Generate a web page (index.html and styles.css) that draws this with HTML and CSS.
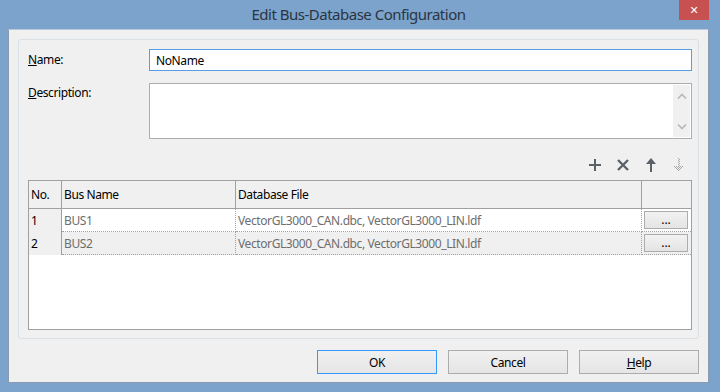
FILE: index.html
```html
<!DOCTYPE html>
<html lang="en">
<head>
    <meta charset="UTF-8">
    <meta name="viewport" content="width=device-width, initial-scale=1.0">
    <title>Edit Bus-Database Configuration</title>
    <link rel="stylesheet" href="styles.css">
</head>
<body>
    <div class="window">
        <div class="titlebar">
            <span></span>
            <span class="title">Edit Bus-Database Configuration</span>
            <button class="close-btn" type="button">&#x2715;</button>
        </div>

        <div class="client">
            <div class="group">
                <div class="form-grid">
                    <label for="name" class="field-label"><u>N</u>ame:</label>
                    <input type="text" id="name" class="name-box" value="NoName">

                    <label for="description" class="field-label desc-label"><u>D</u>escription:</label>
                    <div class="desc-box">
                        <textarea id="description" class="desc-text"></textarea>
                        <div class="scrollbar">
                            <svg width="10" height="6" viewBox="0 0 10 6"><path d="M1 5.5 L5 1.5 L9 5.5" fill="none" stroke="#b8b8b8" stroke-width="1.6"/></svg>
                            <svg width="10" height="6" viewBox="0 0 10 6"><path d="M1 0.5 L5 4.5 L9 0.5" fill="none" stroke="#b8b8b8" stroke-width="1.6"/></svg>
                        </div>
                    </div>
                </div>

                <div class="toolbar">
                    <!-- add -->
                    <svg class="tool" width="16" height="16" viewBox="0 0 16 16"><path d="M8 2 V14 M2 8 H14" stroke="#5b6168" stroke-width="2"/></svg>
                    <!-- delete -->
                    <svg class="tool" width="16" height="16" viewBox="0 0 16 16"><path d="M3 3 L13 13 M13 3 L3 13" stroke="#5b6168" stroke-width="2.4"/></svg>
                    <!-- move up -->
                    <svg class="tool" width="16" height="16" viewBox="0 0 16 16"><path d="M8 4 V15" stroke="#5b6168" stroke-width="2"/><path d="M8 1 L13 7 H3 Z" fill="#5b6168"/></svg>
                    <!-- move down (disabled) -->
                    <svg class="tool" width="16" height="16" viewBox="0 0 16 16">
                        <g fill="#a8a8a8">
                            <rect x="7" y="1" width="1" height="1"/><rect x="8" y="2" width="1" height="1"/>
                            <rect x="7" y="3" width="1" height="1"/><rect x="8" y="4" width="1" height="1"/>
                            <rect x="7" y="5" width="1" height="1"/><rect x="8" y="6" width="1" height="1"/>
                            <rect x="7" y="7" width="1" height="1"/><rect x="8" y="8" width="1" height="1"/>
                            <rect x="3" y="9" width="1" height="1"/><rect x="5" y="9" width="1" height="1"/><rect x="7" y="9" width="1" height="1"/><rect x="9" y="9" width="1" height="1"/><rect x="11" y="9" width="1" height="1"/>
                            <rect x="4" y="10" width="1" height="1"/><rect x="6" y="10" width="1" height="1"/><rect x="8" y="10" width="1" height="1"/><rect x="10" y="10" width="1" height="1"/>
                            <rect x="5" y="11" width="1" height="1"/><rect x="7" y="11" width="1" height="1"/><rect x="9" y="11" width="1" height="1"/>
                            <rect x="6" y="12" width="1" height="1"/><rect x="8" y="12" width="1" height="1"/>
                            <rect x="7" y="13" width="1" height="1"/>
                        </g>
                    </svg>
                </div>

                <div class="grid-box">
                    <table class="bus-table">
                        <thead>
                            <tr>
                                <th class="col-no">No.</th>
                                <th class="col-name">Bus Name</th>
                                <th class="col-file">Database File</th>
                                <th class="col-btn"></th>
                            </tr>
                        </thead>
                        <tbody>
                            <tr>
                                <td class="row-head">1</td>
                                <td>BUS1</td>
                                <td>VectorGL3000_CAN.dbc, VectorGL3000_LIN.ldf</td>
                                <td class="btn-cell"><button type="button" class="dots-btn">...</button></td>
                            </tr>
                            <tr class="alt">
                                <td class="row-head">2</td>
                                <td>BUS2</td>
                                <td>VectorGL3000_CAN.dbc, VectorGL3000_LIN.ldf</td>
                                <td class="btn-cell"><button type="button" class="dots-btn">...</button></td>
                            </tr>
                        </tbody>
                    </table>
                </div>
            </div>

            <div class="buttons">
                <button type="button" class="dlg-btn default">OK</button>
                <button type="button" class="dlg-btn">Cancel</button>
                <button type="button" class="dlg-btn"><u>H</u>elp</button>
            </div>
        </div>
    </div>
</body>
</html>
```

FILE: styles.css
```css
* {
    box-sizing: border-box;
}
body {
    margin: 0;
    width: 720px;
    height: 392px;
    overflow: hidden;
    background-color: #7ba3cb;
    font-family: "Noto Sans", "Open Sans", sans-serif;
    font-size: 12px;
    letter-spacing: -0.4px;
    color: #000;
}
.window {
    padding: 0 11px 9px 8px;
}
.titlebar {
    height: 29px;
    display: grid;
    grid-template-columns: 1fr auto 1fr;
    align-items: start;
}
.title {
    font-size: 15px;
    color: #2b3542;
    padding-top: 4px;
    letter-spacing: -0.5px;
}
.close-btn {
    justify-self: end;
    width: 30px;
    height: 20px;
    border: none;
    background-color: #c75050;
    color: #fff;
    font-size: 11px;
    font-weight: bold;
    padding: 0;
    font-family: "DejaVu Sans", sans-serif;
}
.client {
    height: 354px;
    background-color: #f0f0f0;
    border: 1px solid #8a9bb0;
    border-top-color: #b9c9d9;
    padding: 9px 9px 8px 9px;
    display: flex;
    flex-direction: column;
}
.group {
    border: 1px solid #d9e0e6;
    border-radius: 3px;
    padding: 9px 6px 8px 9px;
}
.form-grid {
    display: grid;
    grid-template-columns: 121px 1fr;
    row-gap: 12px;
}
.field-label {
    line-height: 22px;
}
.desc-label {
    line-height: 20px;
}
.name-box {
    height: 22px;
    border: 1px solid #569de5;
    padding: 0 6px;
    font-family: inherit;
    font-size: 12px;
    letter-spacing: inherit;
    outline: none;
}
.desc-box {
    height: 56px;
    border: 1px solid #abadb3;
    background-color: #fff;
    display: flex;
}
.desc-text {
    flex: 1;
    border: none;
    resize: none;
    outline: none;
}
.scrollbar {
    width: 17px;
    margin: 1px 1px 1px 0;
    background-color: #f0f0f0;
    display: flex;
    flex-direction: column;
    justify-content: space-between;
    align-items: center;
    padding: 8px 0 7px;
}
.scrollbar svg {
    display: block;
}
.toolbar {
    height: 41px;
    display: flex;
    justify-content: flex-end;
    align-items: flex-end;
    gap: 12px;
    padding: 0 5px 7px 0;
}
.tool {
    display: block;
}
.grid-box {
    height: 150px;
    border: 1px solid #a0a0a0;
    background-color: #fff;
}
.bus-table {
    width: 100%;
    table-layout: fixed;
    border-collapse: separate;
    border-spacing: 0;
}
.bus-table th {
    height: 28px;
    font-weight: normal;
    text-align: left;
    background-color: #f0f0f0;
    border-right: 1px solid #a0a0a0;
    border-bottom: 1px solid #a0a0a0;
    padding: 0 2px;
}
.bus-table th.col-btn {
    border-right: none;
}
.col-no {
    width: 33px;
}
.col-name {
    width: 174px;
}
.col-file {
    width: 406px;
}
.bus-table td {
    height: 23px;
    padding: 0 2px;
    color: #6d6d6d;
    border-right: 1px dotted #a0a0a0;
    border-bottom: 1px dotted #a0a0a0;
    white-space: nowrap;
    overflow: hidden;
}
.bus-table td.row-head {
    color: #000;
    background-color: #f0f0f0;
    border-right: 1px solid #a0a0a0;
    border-bottom: none;
}
.bus-table td.btn-cell {
    border-right: none;
    padding: 0 3px 0 2px;
}
.bus-table tr.alt td {
    background-color: #f0f0f0;
}
.dots-btn {
    display: block;
    width: 44px;
    height: 18px;
    border: 1px solid #adadad;
    background: linear-gradient(#f2f2f2, #e4e4e4);
    font-family: inherit;
    font-size: 12px;
    line-height: 10px;
    padding: 0;
    color: #000;
}
.buttons {
    display: flex;
    justify-content: flex-end;
    gap: 11px;
    margin-top: 11px;
}
.dlg-btn {
    width: 120px;
    height: 24px;
    border: 1px solid #acacac;
    background: linear-gradient(#f0f0f0, #e5e5e5);
    font-family: inherit;
    font-size: 12px;
    letter-spacing: inherit;
    color: #000;
    padding: 0;
}
.dlg-btn.default {
    border-color: #3399ff;
}
```
